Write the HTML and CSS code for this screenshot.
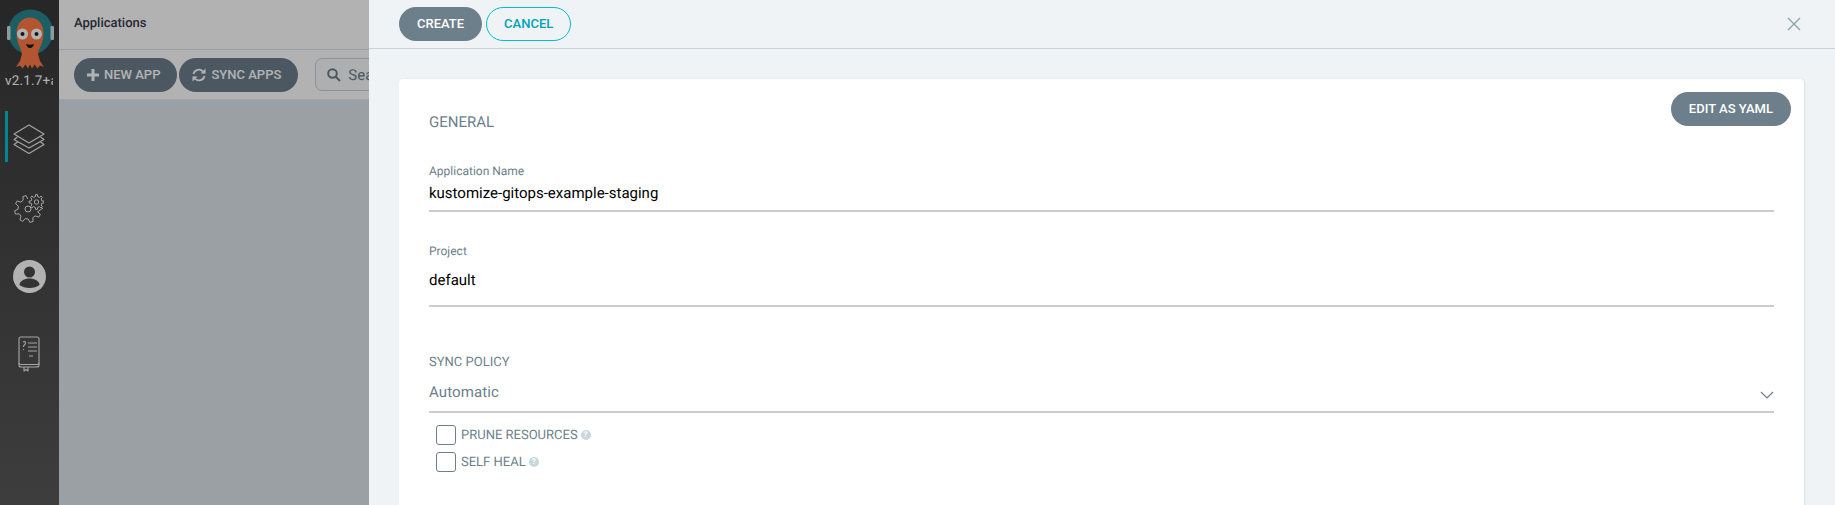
FILE: index.html
```html
<!DOCTYPE html>
<html lang="en">
<head>
<meta charset="utf-8">
<title>Applications</title>
<link rel="stylesheet" href="styles.css">
</head>
<body>
<div class="app">
  <nav class="nav">
    <div class="logo">
      <svg width="48" height="60" viewBox="0 0 48 60">
        <circle cx="24.500" cy="23" r="22.500" fill="#288891"/>
        <rect x="1" y="17" width="3.500" height="14" rx="1.200" fill="#cfdde2"/>
        <rect x="44.500" y="17" width="3.500" height="14" rx="1.200" fill="#cfdde2"/>
        <path d="M10.500 24C10.500 14 17 8.500 24 8.500S37.500 14 37.500 24C37.500 34 33 39 32 45L34 52 38 58 34 56.500 31.500 59.500 28.500 55.500 26 59.500 24 55.500 22 59.500 19.500 55.500 16.500 59.500 14 56.500 10 58 14 52 16 45C15 39 10.500 34 10.500 24z" fill="#ff7a45"/>
        <circle cx="16.500" cy="25" r="5.500" fill="#fff"/>
        <circle cx="30.500" cy="25" r="5.500" fill="#fff"/>
        <circle cx="16.500" cy="25" r="2" fill="#222"/>
        <circle cx="30.500" cy="25" r="2" fill="#222"/>
        <path d="M20 35q4 1.500 8 0q-1 4-4 4t-4-4z" fill="#1a1a1a"/>
      </svg>
      <div class="version">v2.1.7+a</div>
    </div>
    <div class="nav-items">
      <a class="nav-item active">
        <svg width="32" height="32" viewBox="0 0 32 32" fill="none" stroke="#eee" stroke-width="1.100" stroke-linejoin="round"><path d="M16 2 31 11 16 20 1 11z"/><path d="M4.500 14 1 16.500 16 25 31 16.500 27.500 14"/><path d="M4.500 19 1 21.500 16 30.500 31 21.500 27.500 19"/></svg>
      </a>
      <a class="nav-item nav-gear">
        <svg width="30" height="30" viewBox="0 0 30 30" fill="none" stroke="#eee" stroke-width="1" stroke-linejoin="round">
          <path d="M29 14 23.600 17.800 26.400 20.300 24.800 23.100 21.200 21.900 18.800 23.700 19.100 27.500 15.900 28.400 14.200 25 11.200 24.600 8.700 27.400 5.900 25.800 7 22.200 5.200 19.800 1.500 20.100 .6 16.900 4 15.200 4.400 12.200 1.600 9.700 3.200 6.900 6.800 8.100 9.200 6.200 8.900 2.500 12.100 1.600 13.800 5"/>
          <circle cx="14" cy="15" r="3"/>
          <path d="M27.900 6.900 29.900 7.100 29.900 8.900 27.900 9.100 27.100 11 28.400 12.600 27.100 13.900 25.500 12.600 23.600 13.400 23.400 15.400 21.600 15.400 21.400 13.400 19.500 12.600 17.900 13.900 16.600 12.600 17.900 11 17.100 9.100 15.100 8.900 15.100 7.100 17.100 6.900 17.900 5 16.600 3.400 17.900 2.100 19.500 3.400 21.400 2.600 21.600 .6 23.400 .6 23.600 2.600 25.500 3.400 27.100 2.100 28.400 3.400 27.100 5z"/>
          <circle cx="22.500" cy="8" r="2.200"/>
        </svg>
      </a>
      <a class="nav-item nav-user">
        <svg width="33" height="33" viewBox="0 0 33 33"><circle cx="16.500" cy="16.500" r="16.500" fill="#fff"/><circle cx="16.500" cy="12" r="5.500" fill="#4a4a4a"/><path d="M6.500 25c0-4 5-6.500 10-6.500s10 2.500 10 6.500c-2.500 2-6 3-10 3s-7.500-1-10-3z" fill="#4a4a4a"/></svg>
      </a>
      <a class="nav-item nav-book">
        <svg width="22" height="36" viewBox="0 0 22 36" fill="none" stroke="#eee" stroke-width="1.100" stroke-linejoin="round"><path d="M3 1h16q2 0 2 2v26q0 2-2 2H3q-2 0-2-2V3q0-2 2-2z"/><path d="M1 27q0 1.500 2 1.500h16q2 0 2-1.500"/><path d="M6 31v4l2-1.500 2 1.500v-4"/><path d="M10 7h9M10 11h9M10 15h9M11 20h4M5 6q2-1 2.500.500T5.500 10v1M5.500 13v1"/></svg>
      </a>
    </div>
  </nav>
  <main class="page">
    <header class="page-head">Applications</header>
    <div class="toolbar">
      <button class="btn btn-tool">
        <svg width="12" height="12" viewBox="0 0 12 12"><path d="M4.500 0h3v4.500H12v3H7.500V12h-3V7.500H0v-3h4.500z" fill="#fff"/></svg>
        NEW APP
      </button>
      <button class="btn btn-tool">
        <svg width="14" height="14" viewBox="0 0 14 14" fill="none" stroke="#fff" stroke-width="1.800"><path d="M1.500 6A5.500 5.500 0 0 1 11 3.500L12.500 5M12.500 8A5.500 5.500 0 0 1 3 10.500L1.500 9"/><path d="M13.500 .5v5H8.500zM.5 13.500v-5h5z" fill="#fff" stroke="none"/></svg>
        SYNC APPS
      </button>
      <div class="search">
        <svg width="14" height="14" viewBox="0 0 14 14" fill="none" stroke="#6d7f8b" stroke-width="2"><circle cx="5.500" cy="5.500" r="4.300"/><path d="M8.500 8.500 13 13"/></svg>
        <span>Search applications...</span>
      </div>
    </div>
  </main>
  <div class="scrim"></div>
  <aside class="panel">
    <div class="panel-bar">
      <button class="btn btn-solid">CREATE</button>
      <button class="btn btn-outline">CANCEL</button>
      <svg class="close" width="14" height="14" viewBox="0 0 14 14" fill="none" stroke="#8fa4b1" stroke-width="1.400"><path d="M1 1 13 13M13 1 1 13"/></svg>
    </div>
    <div class="panel-body">
      <section class="card">
        <button class="btn btn-solid btn-yaml">EDIT AS YAML</button>
        <h4 class="section-title">GENERAL</h4>
        <div class="field field-name">
          <label class="field-label">Application Name</label>
          <div class="field-value">kustomize-gitops-example-staging</div>
        </div>
        <div class="field field-project">
          <label class="field-label">Project</label>
          <div class="field-value">default</div>
        </div>
        <div class="policy">
          <p class="policy-title">SYNC POLICY</p>
          <div class="select">
            <span>Automatic</span>
            <svg width="14" height="8" viewBox="0 0 14 8" fill="none" stroke="#6d7f8b" stroke-width="1.200"><path d="M1 1 7 7 13 1"/></svg>
          </div>
          <div class="check-row"><span class="checkbox"></span><span class="check-text">PRUNE RESOURCES</span><span class="help">?</span></div>
          <div class="check-row"><span class="checkbox"></span><span class="check-text">SELF HEAL</span><span class="help">?</span></div>
        </div>
      </section>
    </div>
  </aside>
</div>
</body>
</html>
```

FILE: styles.css
```css
* { box-sizing: border-box; }
html, body { margin: 0; height: 100%; }
body { font-family: Roboto, "Liberation Sans", sans-serif; overflow: hidden; text-rendering: geometricPrecision; }

.app { position: relative; display: flex; height: 505px; overflow: hidden; background: #dee6eb; }

.nav { flex: 0 0 59px; overflow: hidden; background: linear-gradient(to bottom, #383838, #585858); display: flex; flex-direction: column; }
.logo { padding: 9px 0 0 6px; height: 111px; }
.logo svg { display: block; }
.version { width: 48px; margin: 4px 0 0 -1px; overflow: hidden; font-size: 13.500px; letter-spacing: .2px; color: #fff; white-space: nowrap; line-height: 16px; }
.nav-items { display: flex; flex-direction: column; }
.nav-item { display: flex; align-items: center; justify-content: center; flex: none; height: 51px; border-left: 3px solid transparent; margin-left: 5px; width: 50px; padding-right: 5px; }
.nav-item.active { border-left-color: #00c1d0; padding-top: 5px; }
.nav-gear { margin-top: 21px; }
.nav-user { margin-top: 17px; }
.nav-book { margin-top: 26px; }

.page { flex: 1; min-width: 0; }
.page-head { height: 50px; background: #fff; border-bottom: 1px solid #dee6eb; padding: 15px 0 0 15px; font-size: 13px; font-weight: 500; line-height: 17px; color: #363c4a; }
.toolbar { height: 50px; background: #fff; border-bottom: 1px solid #e4eaee; display: flex; align-items: center; padding: 0 0 0 15px; gap: 2px; }

.btn { height: 34px; padding: 0 18px; border: 0; border-radius: 17px; background: #6d7f8b; color: #fff; font: 500 13px/34px Roboto, sans-serif; display: inline-flex; align-items: center; white-space: nowrap; }
.btn-tool { padding: 0 17px 0 13px; gap: 5px; }
.search { margin-left: 15px; width: 400px; height: 33px; border: 1px solid #c9d3da; border-radius: 7px; background: #f8fbfc; color: #6d7f8b; display: flex; align-items: center; gap: 7px; padding-left: 11px; font-size: 15px; }

.scrim { position: absolute; inset: 0; background: rgba(0,0,0,.3); }

.panel { position: absolute; top: 0; right: 0; bottom: 0; width: 1466px; background: #eff3f6; }
.panel-bar { height: 49px; border-bottom: 1px solid #c8d3da; display: flex; align-items: center; gap: 4px; padding: 0 34px 0 30px; }
.btn-outline { padding: 0 17px; border: 1px solid #00c0d0; color: #00a2b3; background: transparent; }
.close { margin-left: auto; }
.panel-body { padding: 30px 31px 0 30px; }

.card { position: relative; background: #fff; border-radius: 4px; height: 460px; padding: 31px 30px 0; box-shadow: 1px 0 2px rgba(0,0,0,.08); }
.btn-yaml { position: absolute; top: 13px; right: 13px; }
.section-title { margin: 0; font-size: 15px; font-weight: 400; line-height: 24px; color: #6d7f8b; }
.field { border-bottom: 2px solid #ccc; }
.field-label { display: block; font-size: 12px; line-height: 16px; color: #6d7f8b; }
.field-value { font-size: 15px; color: #000; line-height: 20px; }
.field-name { margin-top: 27px; height: 51px; padding-top: 2px; }
.field-name .field-value { margin-top: 4px; }
.field-project { margin-top: 30px; height: 65px; padding-top: 1px; }
.field-project .field-value { margin-top: 11px; }
.policy { margin-top: 48px; }
.policy-title { margin: 0; font-size: 13px; line-height: 16px; color: #6d7f8b; }
.select { height: 41px; margin-top: 1px; border-bottom: 2px solid #ccc; display: flex; align-items: center; justify-content: space-between; font-size: 15px; letter-spacing: .1px; color: #6d7f8b; }
.select svg { margin-top: 6px; }
.check-row { display: flex; align-items: center; margin-left: 7px; height: 27px; font-size: 13px; color: #6d7f8b; }
.select + .check-row { margin-top: 8px; }
.check-text { padding-top: 2px; }
.checkbox { flex: none; width: 20px; height: 20px; margin-right: 5px; border: 1px solid #6d7f8b; border-radius: 3px; background: #fff; }
.help { flex: none; width: 10px; height: 10px; margin: 1px 0 0 3px; border-radius: 50%; background: #c9d6de; color: #fff; font-size: 8px; font-weight: 700; line-height: 10px; text-align: center; }
```
